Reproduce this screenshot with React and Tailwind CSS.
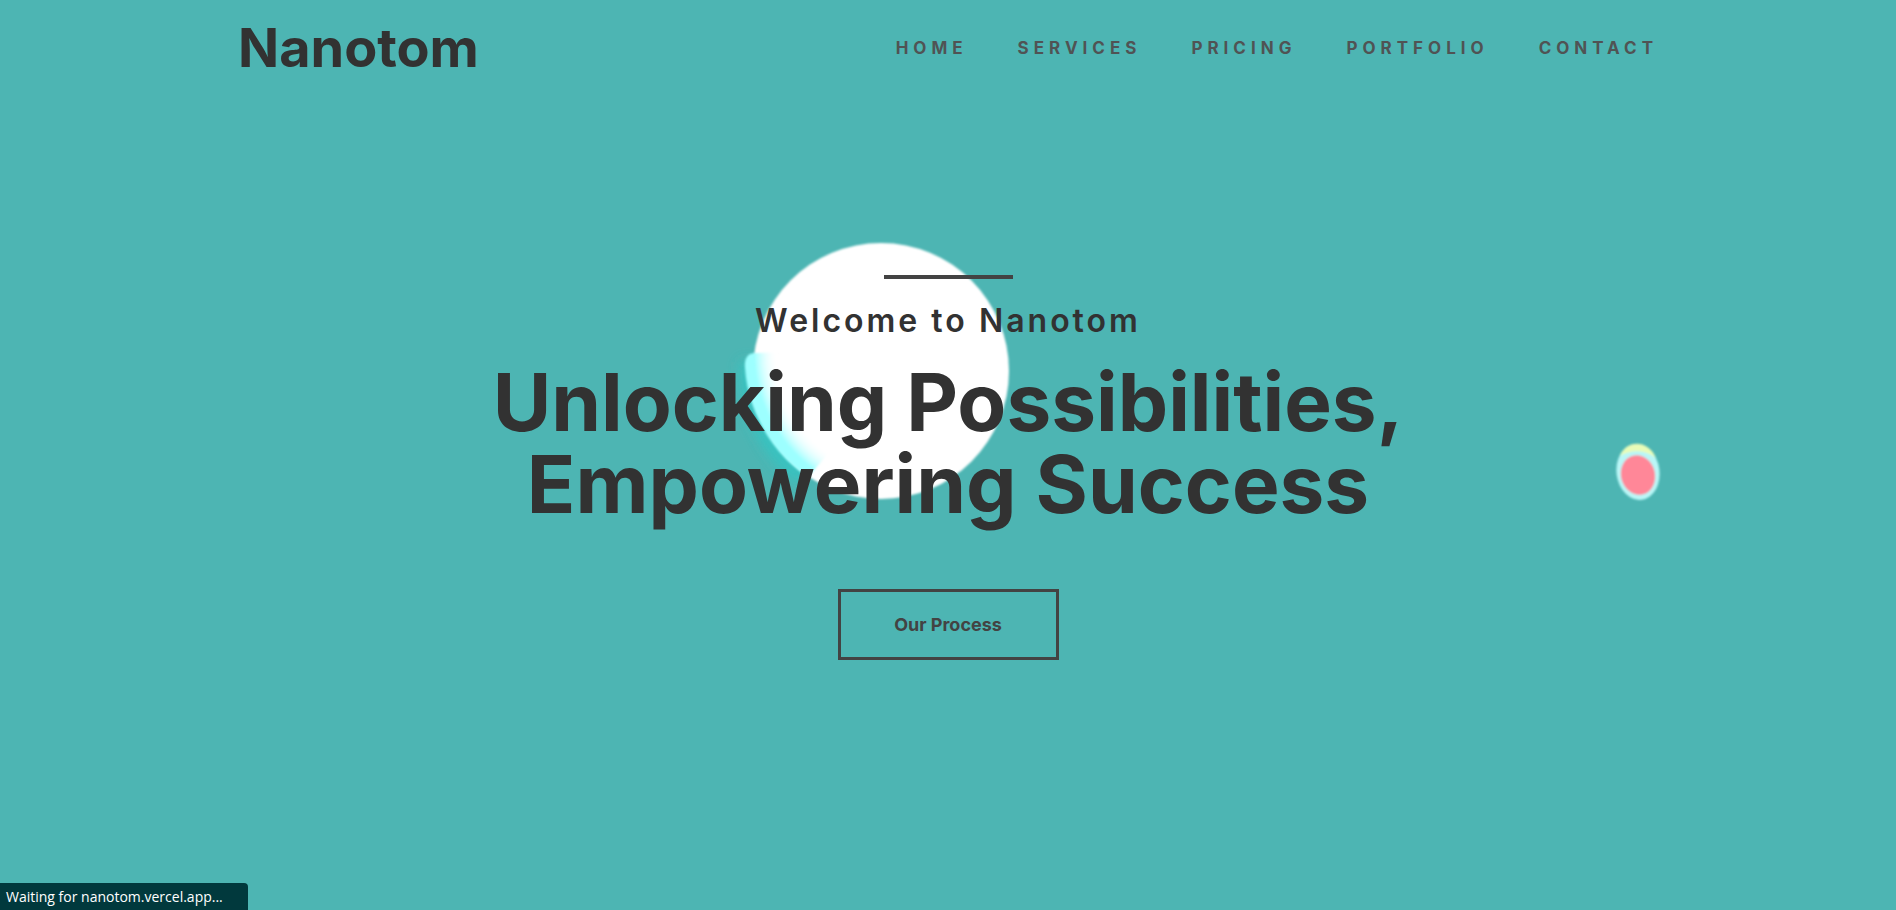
const links = ["Home", "Services", "Pricing", "Portfolio", "Contact"];

function Backdrop() {
  return (
    <svg
      className="absolute inset-0 h-full w-full"
      viewBox="0 0 1896 910"
      preserveAspectRatio="xMidYMid slice"
      aria-hidden="true"
    >
      <defs>
        <filter id="edge" x="-10%" y="-10%" width="120%" height="120%">
          <feGaussianBlur stdDeviation="1.2" />
        </filter>
        <filter id="haze" x="-50%" y="-50%" width="200%" height="200%">
          <feGaussianBlur stdDeviation="7" />
        </filter>
        <radialGradient id="orb" gradientUnits="userSpaceOnUse" cx="900" cy="352" r="166">
          <stop offset="0.74" stopColor="#ffffff" stopOpacity="0" />
          <stop offset="0.88" stopColor="#9dffff" />
          <stop offset="1" stopColor="#9dffff" />
        </radialGradient>
      </defs>
      <path
        d="M748 362C744 400 766 452 804 478"
        fill="none"
        stroke="#2fc9c6"
        strokeWidth="14"
        opacity="0.85"
        filter="url(#haze)"
      />
      <circle cx="881" cy="371" r="128" fill="#ffffff" filter="url(#edge)" />
      <path
        d="M757 353C748 352 744 358 745 368C748 412 772 454 808 477L840 440L790 352Z"
        fill="url(#orb)"
        filter="url(#edge)"
      />
      <g filter="url(#edge)">
        <ellipse cx="1638" cy="472" rx="21.5" ry="28" fill="#b9f7f7" transform="rotate(-8 1638 472)" />
        <path d="M1620 456C1626 440 1648 439 1656 458C1646 450 1632 449 1620 456Z" fill="#e9fcb8" />
        <ellipse cx="1638" cy="475" rx="17" ry="20" fill="#ff8798" transform="rotate(-15 1638 475)" />
      </g>
    </svg>
  );
}

export default function App() {
  return (
    <div className="relative flex min-h-screen flex-col overflow-hidden bg-[#4db5b3] font-[Inter,sans-serif] text-[#323232]">
      <Backdrop />
      <header className="relative mx-auto flex w-full max-w-[1420px] items-center justify-between">
        <a href="#home" className="text-[54px] leading-[96px] font-bold">
          Nanotom
        </a>
        <nav className="flex gap-[50px]">
          {links.map((link) => (
            <a
              key={link}
              href={"#" + link.toLowerCase()}
              className="text-[17px] leading-6 font-bold tracking-[5px] text-[#505354] uppercase"
            >
              {link}
            </a>
          ))}
        </nav>
      </header>
      <main className="relative flex flex-col items-center px-6 pt-[179px] text-center">
        <div className="h-1 w-[129px] bg-[#434343]" />
        <p className="mt-5 text-[32px] leading-[44px] font-semibold tracking-[3px]">Welcome to Nanotom</p>
        <h1 className="mt-[18px] max-w-[1000px] text-[80px] leading-[82px] font-bold">
          Unlocking Possibilities, Empowering Success
        </h1>
        <button
          type="button"
          className="mt-16 h-[71px] w-[221px] border-3 border-[#434343] text-lg font-bold text-[#434343]"
        >
          Our Process
        </button>
      </main>
      <div
        role="status"
        className="absolute bottom-0 left-0 h-[27px] w-[248px] rounded-tr bg-[#01393d] pl-[6px] font-['Open_Sans',sans-serif] text-sm leading-[27px] text-white"
      >
        Waiting for nanotom.vercel.app...
      </div>
    </div>
  );
}
